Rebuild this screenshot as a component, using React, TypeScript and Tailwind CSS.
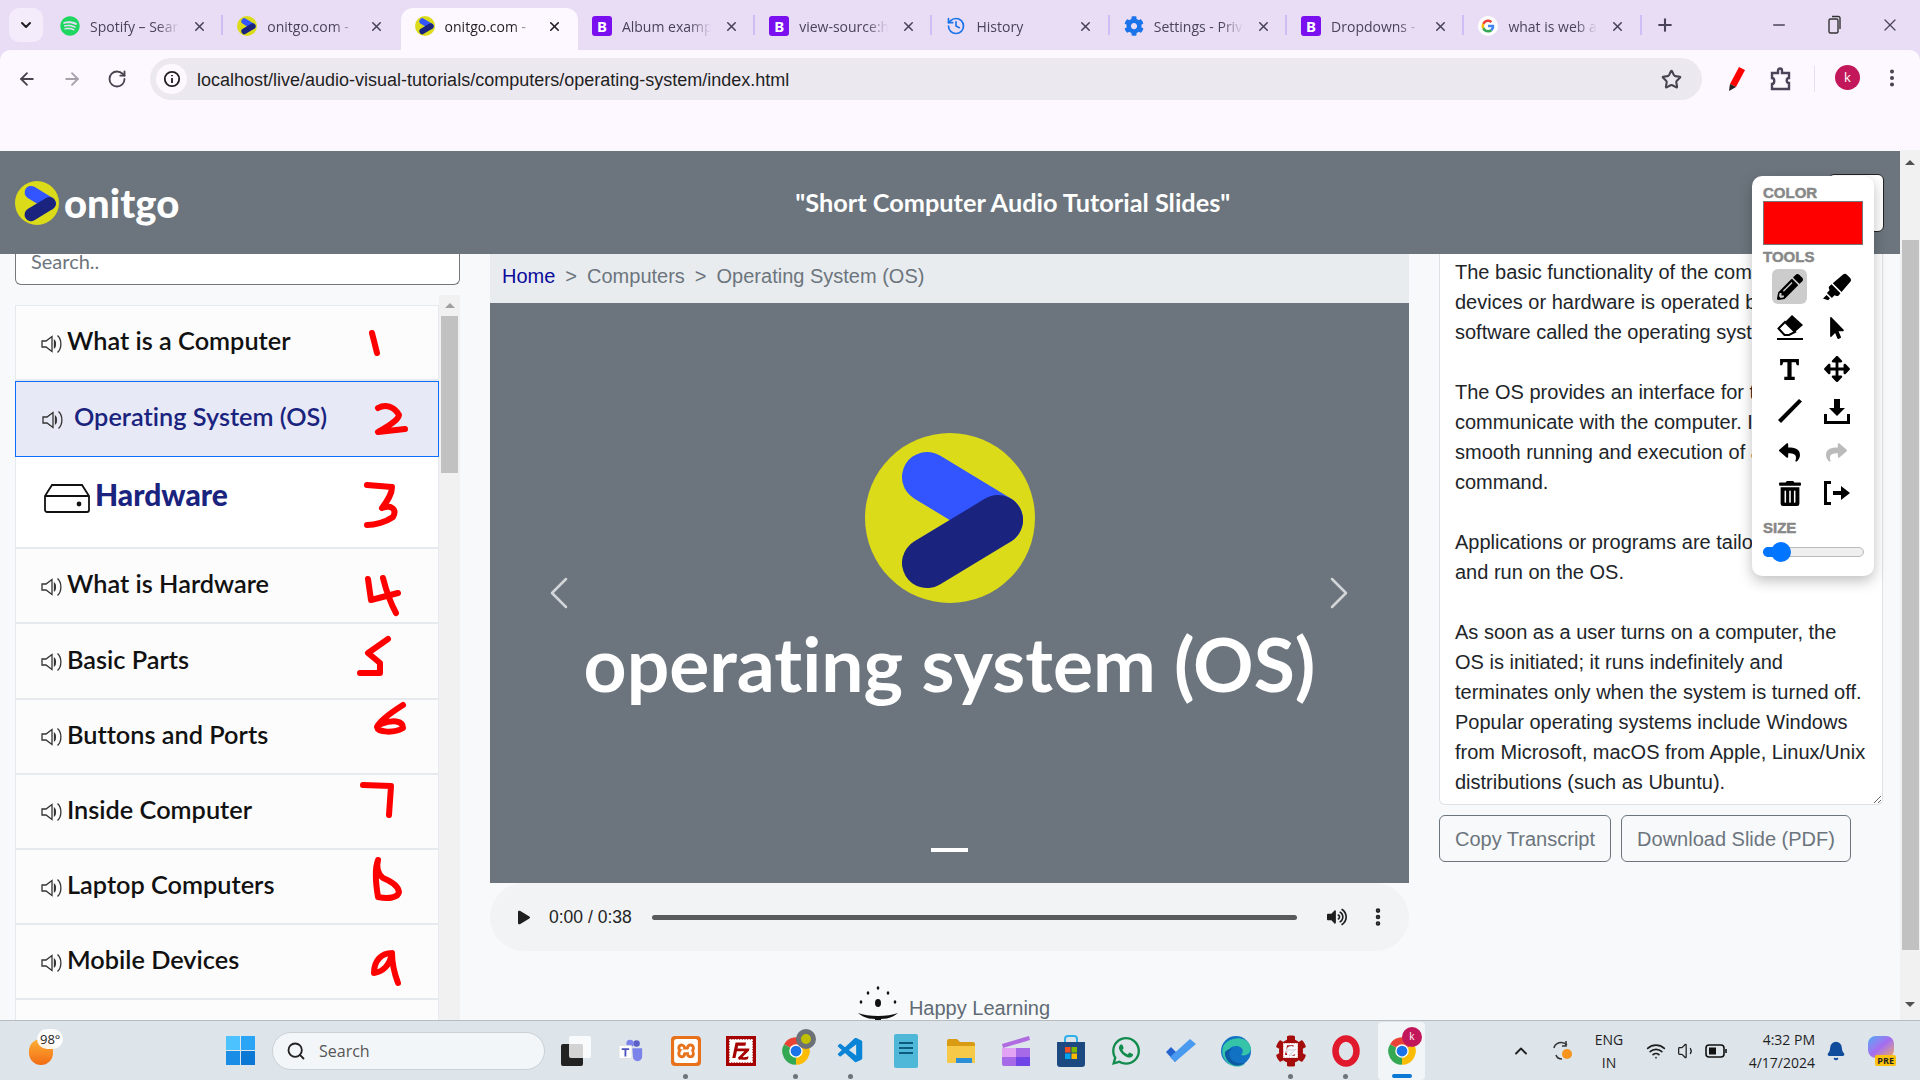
import React from 'react';
import { ArrowLeft, ArrowRight, RotateCw, Star, X, Plus, Minus, ChevronDown, ChevronUp, ChevronLeft, ChevronRight, EllipsisVertical, History, Search, Wifi, Volume1, Bell } from 'lucide-react';
import { FaSpotify, FaCog, FaWhatsapp, FaPencilAlt, FaHighlighter, FaMousePointer, FaArrowsAlt, FaReply, FaShare, FaPlay, FaVolumeUp, FaTrashAlt } from 'react-icons/fa';
import { SiXampp, SiFilezilla } from 'react-icons/si';
import { VscVscode } from 'react-icons/vsc';

const LogoMark = ({ className }: { className: string }) => (
  <svg viewBox="0 0 170 170" className={className}>
    <circle cx="85" cy="85" r="85" fill="#dbdb1a" />
    <path d="M62 44 L133 87" stroke="#3355ff" strokeWidth="50" strokeLinecap="round" />
    <path d="M62 130 L133 87" stroke="#1a237e" strokeWidth="50" strokeLinecap="round" />
  </svg>
);

const BootstrapIcon = () => (
  <span className="flex h-5 w-5 items-center justify-center rounded-[3px] bg-[#7a10f0] text-[15px] font-bold leading-none text-white">B</span>
);

const GoogleIcon = () => (
  <svg viewBox="0 0 48 48" className="h-5 w-5">
    <circle cx="24" cy="24" r="24" fill="#fff" />
    <path fill="#EA4335" d="M24 14.5c2.6 0 4.5 1 5.9 2.3l4.3-4.2C31.600 10.100 28.100 8.500 24 8.500c-6.100 0-11.300 3.500-13.800 8.600l5 3.900c1.200-3.700 4.700-6.500 8.800-6.500z" />
    <path fill="#4285F4" d="M39 24.400c0-1.300-.1-2.200-.3-3.200H24v5.800h8.400c-.2 1.400-1.100 3.500-3.200 4.900l4.900 3.800c2.900-2.700 4.900-6.600 4.900-11.300z" />
    <path fill="#FBBC05" d="M15.200 27c-.3-.9-.5-1.900-.5-3s.2-2.100.5-3l-5-3.900C9.100 19.200 8.500 21.500 8.500 24s.6 4.800 1.700 6.900l5-3.900z" />
    <path fill="#34A853" d="M24 39.500c4.200 0 7.700-1.400 10.200-3.800l-4.900-3.800c-1.300.9-3 1.500-5.300 1.500-4.100 0-7.600-2.800-8.800-6.400l-5 3.900c2.500 5.100 7.700 8.600 13.800 8.600z" />
  </svg>
);

const tabs = [
  { title: 'Spotify – Sear', icon: <FaSpotify className="h-5 w-5 text-[#1ed760]" /> },
  { title: 'onitgo.com -', icon: <LogoMark className="h-5 w-5" /> },
  { title: 'onitgo.com -', icon: <LogoMark className="h-5 w-5" />, active: true },
  { title: 'Album examp', icon: <BootstrapIcon /> },
  { title: 'view-source:h', icon: <BootstrapIcon /> },
  { title: 'History', icon: <History className="h-5 w-5 text-[#1a73e8]" strokeWidth={2} /> },
  { title: 'Settings - Priv', icon: <FaCog className="h-5 w-5 text-[#1a73e8]" /> },
  { title: 'Dropdowns -', icon: <BootstrapIcon /> },
  { title: 'what is web a', icon: <GoogleIcon /> },
];

const TabStrip = () => (
  <div className="flex h-[50px] shrink-0 items-start bg-[#e9ddf6] text-[#4a4458]">
    <div className="ml-[9px] mt-2 flex h-[34px] w-[34px] items-center justify-center rounded-[10px] bg-[#f4ecfb]">
      <ChevronDown className="h-4 w-4 text-[#1f1f1f]" strokeWidth={3} />
    </div>
    <div className="ml-[3px] flex">
      {tabs.map((tab, i) => (
        <div
          key={i}
          className={`relative mt-2 flex h-[42px] w-[177.300px] items-center pb-[6px] pl-[14px] ${tab.active ? 'rounded-t-[12px] bg-[#fdf7ff] text-[#1f1f1f]' : ''}`}
        >
          <span className="flex w-5 shrink-0 justify-center">{tab.icon}</span>
          <span className="ml-[10px] w-[94px] overflow-hidden whitespace-nowrap text-[14px] [mask-image:linear-gradient(to_right,black_72%,transparent_95%)] [font-family:'Open_Sans',sans-serif]">
            {tab.title}
          </span>
          <X className="ml-[8px] h-[15px] w-[15px]" strokeWidth={2.5} />
          {i !== 1 && i !== 2 && <span className="absolute right-0 top-[7px] h-5 w-[2px] bg-[#cdbff5]" />}
        </div>
      ))}
    </div>
    <Plus className="ml-[13px] mt-[15px] h-5 w-5" strokeWidth={2.5} />
    <div className="ml-auto mt-[15px] flex items-center pr-[20px]">
      <Minus className="h-[18px] w-[18px]" />
      <svg viewBox="0 0 16 20" className="ml-[38px] h-5 w-4 fill-none stroke-[#333]" strokeWidth="1.400">
        <rect x="3" y="4" width="9" height="14" rx="1.500" />
        <path d="M6 1.500h6.500a1.500 1.500 0 0 1 1.500 1.500v11" />
      </svg>
      <X className="ml-[38px] h-[20px] w-[20px]" strokeWidth={1.5} />
    </div>
  </div>
);

const Toolbar = () => (
  <div className="h-[100px] shrink-0 bg-[#e9ddf6]">
    <div className="flex h-full items-start rounded-t-[10px] bg-[#fdf7ff] pt-2">
      <ArrowLeft className="ml-[17px] mt-[11px] h-5 w-5 text-[#47434f]" strokeWidth={2.2} />
      <ArrowRight className="ml-[25px] mt-[11px] h-5 w-5 text-[#a5a1ab]" strokeWidth={2.2} />
      <RotateCw className="ml-[25px] mt-[11px] h-5 w-5 text-[#47434f]" strokeWidth={2.2} />
      <div className="ml-[23px] flex h-[42px] w-[1552px] items-center rounded-full bg-[#ece8f0] pl-[6px]">
        <span className="flex h-[30px] w-[31px] items-center justify-center rounded-full bg-[#fdf7ff]">
          <svg viewBox="0 0 20 20" className="h-[18px] w-[18px] fill-none stroke-[#1f1f1f]" strokeWidth="2">
            <circle cx="10" cy="10" r="8" />
            <path d="M10 9v5.500M10 5.500v1.500" />
          </svg>
        </span>
        <span className="ml-[10px] mt-[2px] whitespace-nowrap text-[18px] text-[#1f1f1f] [font-family:'Liberation_Sans',sans-serif]">
          localhost/live/audio-visual-tutorials/computers/operating-system/index.html
        </span>
        <Star className="ml-auto mr-5 h-[21px] w-[21px] text-[#47434f]" strokeWidth={2.4} />
      </div>
      <svg viewBox="0 0 20 26" className="ml-[24px] mt-[8px] h-[26px] w-5">
        <path d="M13 1l6 3-9 17-6-3z" fill="#f00" />
        <path d="M4 18l6 3-7 4z" fill="#222" />
      </svg>
      <svg viewBox="0 0 22 24" className="ml-[24px] mt-[9px] h-6 w-[22px] fill-none stroke-[#4a4458]" strokeWidth="2.400">
        <path d="M2 6h6V3.500a2 2 0 0 1 4 0V6h7v5c-3 0-3 5 0 5v6H2v-5c3 0 3-6 0-6z" />
      </svg>
      <span className="ml-[22px] mt-[8px] h-[26px] w-px bg-[#e6dff0]" />
      <span className="ml-[20px] mt-[7px] flex h-[25px] w-[25px] items-center justify-center rounded-full bg-[#c2185b] text-[13px] text-white [font-family:'Open_Sans',sans-serif]">k</span>
      <EllipsisVertical className="ml-[21px] mt-[9px] h-[22px] w-[22px] text-[#47434f]" strokeWidth={2.4} />
    </div>
  </div>
);

const Speaker = () => (
  <svg viewBox="0 0 21 22" className="mt-[3px] h-[22px] w-[21px] shrink-0 fill-none stroke-[#333]" strokeWidth="1.300">
    <path d="M1 8h4l6-4.500v15L5 14H1z" />
    <path d="M13.500 7.500c1.200 1 1.200 6 0 7z" fill="#222" />
    <path d="M16.500 2.500c4.500 4 4.500 13 0 17" />
  </svg>
);

const lessons = [
  { title: 'What is a Computer' },
  { title: 'Operating System (OS)', selected: true },
  { title: 'Hardware', heading: true },
  { title: 'What is Hardware' },
  { title: 'Basic Parts' },
  { title: 'Buttons and Ports' },
  { title: 'Inside Computer' },
  { title: 'Laptop Computers' },
  { title: 'Mobile Devices' },
  { title: '' },
];

const Sidebar = () => (
  <div className="ml-[15px] flex w-[445px] shrink-0 flex-col overflow-hidden">
    <input
      placeholder="Search.."
      className="h-[31px] w-full shrink-0 rounded-b-[6px] border border-t-0 border-[#777] bg-white pb-[16px] pl-[15px] text-[20px] outline-none placeholder:text-[#6c757d] [font-family:'Lato',sans-serif]"
    />
    <div className="mt-[10px] flex min-h-0 flex-1">
      <div className="w-[424px] shrink-0 overflow-hidden pt-[10px]">
        <div className="border-x border-t border-[#e6eaee] [font-family:'Lato',sans-serif] [font-variant-ligatures:none]">
          {lessons.map((lesson) =>
            lesson.heading ? (
              <div key={lesson.title} className="flex h-[92px] items-start border-b-2 border-[#e6eaee] bg-white pl-7 pt-[26px]">
                <svg viewBox="0 0 46 30" className="h-[30px] w-[46px] fill-none stroke-[#111]" strokeWidth="1.800">
                  <path d="M1 13L8 2h30l7 11v14a2 2 0 0 1-2 2H3a2 2 0 0 1-2-2z" />
                  <path d="M1 13h44" />
                  <circle cx="35" cy="21" r="1.500" fill="#111" />
                </svg>
                <span className="ml-[5px] mt-[-7px] text-[30px] font-black leading-[36px] text-[#1a237e]">{lesson.title}</span>
              </div>
            ) : lesson.selected ? (
              <div key={lesson.title} className="-mx-px flex h-[76px] items-center border border-[#0d6efd] bg-[#e7e9f6] pb-[2px] pl-[26px] text-[#1a237e]">
                <Speaker />
                <span className="ml-[11px] mt-[-2px] text-[25.300px] font-semibold">{lesson.title}</span>
              </div>
            ) : (
              <div key={lesson.title} className="flex h-[75.200px] items-center border-b-2 border-[#e6eaee] bg-[#fcfcfc] pb-[1px] pl-[25px] text-[#111]">
                {lesson.title && <Speaker />}
                <span className="ml-[5px] mt-[-2px] text-[25.300px] font-semibold">{lesson.title}</span>
              </div>
            ),
          )}
        </div>
      </div>
      <div className="flex w-[21px] flex-col items-center bg-[#f1f1f1] pt-[8px]">
        <span className="h-0 w-0 border-x-[5px] border-b-[5px] border-x-transparent border-b-[#a0a0a0]" />
        <span className="mt-[8px] h-[157px] w-[17px] bg-[#c1c1c1]" />
      </div>
    </div>
  </div>
);

const AudioBar = () => (
  <div className="flex h-[68px] shrink-0 items-center rounded-[34px] bg-[#f1f3f4] text-[#1f1f1f]">
    <FaPlay className="ml-[28px] h-[15px] w-[12px]" />
    <span className="ml-[19px] w-[82px] whitespace-nowrap text-[17.500px] [font-family:'Liberation_Sans',sans-serif]">0:00 / 0:38</span>
    <span className="ml-[21px] h-[5px] w-[645px] rounded-full bg-[#5a5a5a]" />
    <FaVolumeUp className="ml-[30px] h-5 w-5" />
    <EllipsisVertical className="ml-[20px] h-[22px] w-[22px]" strokeWidth={3} />
  </div>
);

const MainColumn = () => (
  <div className="ml-[30px] flex w-[919px] shrink-0 flex-col [font-family:'Liberation_Sans',sans-serif]">
    <div className="flex h-[49px] shrink-0 items-center gap-[10px] bg-[#e9ecef] pb-[5px] pl-3 text-[20px] text-[#6c757d]">
      <span className="text-[#0a0a9c]">Home</span>
      <span>&gt;</span>
      <span>Computers</span>
      <span>&gt;</span>
      <span>Operating System (OS)</span>
    </div>
    <div className="relative flex h-[580px] shrink-0 flex-col items-center bg-[#6c757d] pt-[130px]">
      <LogoMark className="h-[170px] w-[170px]" />
      <div className="mt-[14px] whitespace-nowrap text-[75px] font-bold leading-[92px] text-white [font-family:'Lato',sans-serif] [font-variant-ligatures:none]">operating system (OS)</div>
      <ChevronLeft className="absolute left-[41px] top-[262px] h-[56px] w-[56px] text-white/70" strokeWidth={1.100} />
      <ChevronRight className="absolute right-[42px] top-[262px] h-[56px] w-[56px] text-white/70" strokeWidth={1.100} />
      <span className="absolute bottom-[31px] left-[441px] h-[4px] w-[37px] bg-white" />
    </div>
    <AudioBar />
    <div className="mt-[34px] flex items-start justify-center pl-[9px] text-[20px] text-[#5f6b75]">
      <svg viewBox="0 0 40 36" className="h-[36px] w-[40px] fill-[#111]">
        <ellipse cx="20" cy="3" rx="1.300" ry="1.800" />
        <ellipse cx="10" cy="8" rx="1.300" ry="1.800" />
        <ellipse cx="30" cy="8" rx="1.300" ry="1.800" />
        <ellipse cx="3" cy="17" rx="1.300" ry="1.800" />
        <ellipse cx="37" cy="17" rx="1.300" ry="1.800" />
        <ellipse cx="20" cy="18" rx="3" ry="4" />
        <path d="M0 28c10 4 30 4 40 0-6 5-12 6-17 6v2h-6v-2c-5 0-11-1-17-6z" />
      </svg>
      <span className="ml-[11px] mt-[8px]">Happy Learning</span>
    </div>
  </div>
);

const transcript = `The basic functionality of the computer's
devices or hardware is operated by a
software called the operating system.

The OS provides an interface for the user to
communicate with the computer. It ensures
smooth running and execution of any
command.

Applications or programs are tailored to
and run on the OS.

As soon as a user turns on a computer, the
OS is initiated; it runs indefinitely and
terminates only when the system is turned off.
Popular operating systems include Windows
from Microsoft, macOS from Apple, Linux/Unix
distributions (such as Ubuntu).`;

const TranscriptColumn = () => (
  <div className="ml-[30px] w-[444px] shrink-0 [font-family:'Liberation_Sans',sans-serif]">
    <textarea
      readOnly
      wrap="off"
      defaultValue={transcript}
      className="block h-[551px] w-full resize overflow-hidden rounded-b-[6px] border border-t-0 border-[#dee2e6] bg-white pl-[15px] pt-[3px] text-[20px] leading-[30px] text-[#212529] outline-none"
    />
    <div className="mt-[10px] flex gap-[10px]">
      <button className="h-[47px] w-[172px] rounded-[6px] border border-[#6c757d] text-[20px] text-[#6c757d]">Copy Transcript</button>
      <button className="h-[47px] w-[230px] rounded-[6px] border border-[#6c757d] text-[20px] text-[#6c757d]">Download Slide (PDF)</button>
    </div>
  </div>
);

const paletteTools = [
  <FaPencilAlt className="h-[26px] w-[26px]" />,
  <FaHighlighter className="h-[28px] w-[28px]" />,
  <svg viewBox="0 0 26 25" className="h-[25px] w-[26px]">
    <path d="M15 0L26 10 18 17 8 7z" />
    <path d="M8 7L1.500 13.500 7.500 20 12 20 18 17z" fill="none" stroke="#000" strokeWidth="2" />
    <path d="M0 23h26v2H0z" />
  </svg>,
  <FaMousePointer className="h-[22px] w-[22px]" />,
  <svg viewBox="0 0 20 22" className="h-[23px] w-[21px]"><path d="M1 1h18v6h-2l-1-3h-4v14h3v3H5v-3h3V4H4L3 7H1z" /></svg>,
  <FaArrowsAlt className="h-[26px] w-[26px]" />,
  <svg viewBox="0 0 24 24" className="h-6 w-6"><path d="M21 0l3 2.500L3 24l-3-3z" /></svg>,
  <svg viewBox="0 0 26 26" className="h-[26px] w-[26px]"><path d="M10 1h6v9h5l-8 8-8-8h5zM0 16h3v7h20v-7h3v10H0z" /></svg>,
  <FaReply className="h-[21px] w-[21px]" />,
  <FaShare className="h-[21px] w-[21px] text-[#bbb]" />,
  <FaTrashAlt className="h-[25px] w-[22px]" />,
  <svg viewBox="0 0 26 24" className="h-6 w-[26px]"><path d="M0 0h7v3H3v18h4v3H0zM9 10h8V5l9 7-9 7v-5H9z" /></svg>,
];

const paletteLabel = "text-[15px] font-bold leading-[16px] text-[#888] [-webkit-text-stroke:0.5px_#888]";

const DrawingPalette = () => (
  <div className="absolute left-[1752px] top-[26px] z-20 h-[400px] w-[122px] rounded-[10px] bg-white pl-[11px] pt-[9px] shadow-[0_5px_14px_rgba(0,0,0,0.25)] [font-family:'Liberation_Sans',sans-serif]">
    <div className={paletteLabel}>COLOR</div>
    <div className="h-[44px] w-[100px] border border-[#777] bg-[#f00]" />
    <div className={`mt-[4px] ${paletteLabel}`}>TOOLS</div>
    <div className="ml-[9px] mt-[4px] grid w-[84px] grid-cols-[35px_35px] gap-x-[12px] gap-y-[6.400px]">
      {paletteTools.map((tool, i) => (
        <span key={i} className={`flex h-[35px] items-center justify-center rounded-[6px] ${i === 0 ? 'bg-[#ccc]' : ''}`}>
          {tool}
        </span>
      ))}
    </div>
    <div className={`mt-[9px] ${paletteLabel}`}>SIZE</div>
    <div className="relative mt-[11px] h-[10px] w-[101px] rounded-full border border-[#bbb] bg-[#efefef]">
      <span className="absolute -left-px -top-px h-[10px] w-5 rounded-full bg-[#0075ff]" />
      <span className="absolute left-[7px] top-[-6px] h-5 w-5 rounded-full bg-[#0075ff]" />
    </div>
  </div>
);

const ChromeIcon = () => (
  <svg viewBox="0 0 24 24" className="h-[30px] w-[30px]">
    <path d="M12 12L2.470 6.500A11 11 0 0 1 21.530 6.500z" fill="#ea4335" />
    <path d="M12 12L21.530 6.500A11 11 0 0 1 12 23z" fill="#fbbc05" />
    <path d="M12 12L12 23A11 11 0 0 1 2.470 6.500z" fill="#34a853" />
    <circle cx="12" cy="12" r="5.400" fill="#fff" />
    <circle cx="12" cy="12" r="4.300" fill="#1a73e8" />
  </svg>
);

const taskbarApps = [
  {
    icon: (
      <span className="relative block h-[30px] w-[30px]">
        <span className="absolute bottom-0 left-0 h-[22px] w-[22px] rounded-[2px] bg-[#222]" />
        <span className="absolute right-0 top-0 h-[22px] w-[22px] rounded-[2px] bg-white/80" />
      </span>
    ),
  },
  {
    icon: (
      <svg viewBox="0 0 28 28" className="h-[26px] w-[26px]">
        <circle cx="20" cy="6" r="3.500" fill="#5b5fc7" />
        <path d="M15 11h11v9a5 5 0 0 1-10 0z" fill="#7b83eb" />
        <circle cx="13" cy="6" r="4" fill="#7b83eb" />
        <rect x="1" y="8" width="14" height="14" rx="1.500" fill="#fff" stroke="#ddd" />
        <path d="M4 11h8v2H9v7H7v-7H4z" fill="#4b53bc" />
      </svg>
    ),
  },
  {
    dot: true,
    icon: (
      <span className="flex h-[30px] w-[30px] items-center justify-center rounded-[4px] bg-[#e8711c]">
        <SiXampp className="h-[24px] w-[24px] text-white" />
      </span>
    ),
  },
  {
    icon: (
      <span className="flex h-[30px] w-[30px] items-center justify-center bg-[#a60000]">
        <SiFilezilla className="h-[24px] w-[24px] text-white" />
      </span>
    ),
  },
  {
    dot: true,
    icon: (
      <span className="relative block h-[30px] w-[30px]">
        <ChromeIcon />
        <span className="absolute -right-[5px] -top-[7px] h-5 w-5 rounded-full border-[5px] border-[#6b7177] bg-[#c0c000]" />
      </span>
    ),
  },
  { dot: true, icon: <VscVscode className="h-[30px] w-[30px] text-[#0a84d6]" /> },
  {
    icon: (
      <span className="flex h-[34px] w-[24px] flex-col gap-[3px] rounded-[2px] bg-[#4fb8d8] px-[5px] pt-[8px]">
        <span className="h-[2px] bg-[#0d5c80]" />
        <span className="h-[2px] bg-[#0d5c80]" />
        <span className="h-[2px] bg-[#0d5c80]" />
      </span>
    ),
  },
  {
    icon: (
      <svg viewBox="0 0 30 26" className="h-[28px] w-[30px]">
        <path d="M1 3a2 2 0 0 1 2-2h8l3 3h13a2 2 0 0 1 2 2v4H1z" fill="#d99b12" />
        <path d="M1 8h28v16a1 1 0 0 1-1 1H2a1 1 0 0 1-1-1z" fill="#f7c948" />
        <path d="M10 20h16v5H10z" fill="#2a8fd6" />
      </svg>
    ),
  },
  {
    icon: (
      <svg viewBox="0 0 30 30" className="h-[30px] w-[30px]">
        <path d="M1 8L28 0l1 4L2 12z" fill="#b06be0" />
        <path d="M1 12h28v16a2 2 0 0 1-2 2H3a2 2 0 0 1-2-2z" fill="#a66ae8" />
        <path d="M1 12h14v9H1z" fill="#e3a3f5" />
        <path d="M15 21h14v9H15z" fill="#6f45e8" />
      </svg>
    ),
  },
  {
    icon: (
      <svg viewBox="0 0 30 32" className="h-[32px] w-[30px]">
        <path d="M9 8V4a3 3 0 0 1 3-3h6a3 3 0 0 1 3 3v4" fill="none" stroke="#2fb0e8" strokeWidth="2" />
        <path d="M1 7h28v22a3 3 0 0 1-3 3H4a3 3 0 0 1-3-3z" fill="#1c4a80" />
        <rect x="9" y="12" width="5.500" height="5.500" fill="#f25022" />
        <rect x="15.500" y="12" width="5.500" height="5.500" fill="#7fba00" />
        <rect x="9" y="18.500" width="5.500" height="5.500" fill="#00a4ef" />
        <rect x="15.500" y="18.500" width="5.500" height="5.500" fill="#ffb900" />
      </svg>
    ),
  },
  { icon: <FaWhatsapp className="h-[32px] w-[32px] text-[#128c4c]" /> },
  {
    icon: (
      <svg viewBox="0 0 32 26" className="h-[26px] w-[32px]">
        <path d="M1 14l5-5 9 9-5 6z" fill="#2564cf" />
        <path d="M10 24l-5-5L25 1l6 5z" fill="#4a9bf0" />
      </svg>
    ),
  },
  {
    icon: (
      <svg viewBox="0 0 32 32" className="h-[32px] w-[32px]">
        <circle cx="16" cy="16" r="15" fill="#1172c4" />
        <path d="M3 12C6 3 24-1 30 10c3 7-3 12-9 10 4-4 1-9-5-9-7 0-9 6-7 12 2 5 8 8 16 6-8 6-19 1-22-8-1-3-1-6 0-9z" fill="#35c4a8" />
        <path d="M14 13c-5 1-6 7-3 11 3 4 9 5 14 4-9 7-21-1-20-11 3-3 6-4 9-4z" fill="#0c59a4" />
      </svg>
    ),
  },
  {
    dot: true,
    icon: (
      <span className="relative flex h-[30px] w-[30px] items-center justify-center">
        <FaCog className="absolute h-[32px] w-[32px] text-[#a50c0c]" />
        <SiFilezilla className="relative h-[15px] w-[15px] text-white" />
      </span>
    ),
  },
  {
    dot: true,
    icon: (
      <svg viewBox="0 0 30 32" className="h-[32px] w-[30px] fill-none stroke-[#e0192c]" strokeWidth="6.500">
        <ellipse cx="15" cy="16" rx="10.500" ry="12.500" />
      </svg>
    ),
  },
];

const Taskbar = () => (
  <div className="relative z-10 flex h-[60px] shrink-0 items-center border-t border-[#b5bcc2] bg-[#dde4ea] text-[#1f1f1f] [font-family:'Open_Sans',sans-serif]">
    <div className="relative ml-[29px] mt-[2px] h-[26px] w-[24px] rounded-full bg-gradient-to-b from-[#fbb034] to-[#f26a13]">
      <span className="absolute -top-[10px] left-[8px] rounded-full bg-white/90 px-[3px] text-[13px] leading-[20px]">98°</span>
    </div>
    <div className="ml-[173px] grid h-[29px] w-[29px] grid-cols-2 gap-[1px]">
      <span className="bg-[#4cc2ff]" />
      <span className="bg-[#2aa5f5]" />
      <span className="bg-[#1a8de6]" />
      <span className="bg-[#0a78d4]" />
    </div>
    <div className="ml-[17px] flex h-[38px] w-[273px] items-center rounded-full border border-[#c9d0d6] bg-[#f3f6f8] pl-[13px]">
      <Search className="h-5 w-5 text-[#222]" strokeWidth={2.2} />
      <span className="ml-[13px] text-[16px] text-[#555]">Search</span>
    </div>
    <div className="ml-[3px] flex">
      {taskbarApps.map((app, i) => (
        <div key={i} className="relative flex h-[58px] w-[55px] items-center justify-center">
          {app.icon}
          {app.dot && <span className="absolute bottom-[1px] h-[5px] w-[5px] rounded-full bg-[#6e7478]" />}
        </div>
      ))}
      <div className="relative ml-[5px] flex h-[58px] w-[47px] items-center justify-center rounded-[4px] bg-[#f2f5f7]">
        <ChromeIcon />
        <span className="absolute right-[3px] top-[5px] flex h-[20px] w-[20px] items-center justify-center rounded-full bg-[#c2185b] text-[10px] text-white">k</span>
        <span className="absolute bottom-[2px] h-[4px] w-5 rounded-full bg-[#0a78d4]" />
      </div>
    </div>
    <ChevronUp className="ml-[86px] h-5 w-5" strokeWidth={2.2} />
    <svg viewBox="0 0 22 24" className="ml-[20px] h-6 w-[22px] fill-none stroke-[#333]" strokeWidth="1.500">
      <path d="M3 9c1-5 8-8 13-3M5 16c1 3 4 4 6 4" />
      <path d="M15 2v5h-4" />
      <circle cx="16" cy="15" r="5" fill="#f7941d" stroke="none" />
    </svg>
    <div className="ml-[16px] w-[40px] text-center text-[14px] leading-[23px]">
      <div>ENG</div>
      <div>IN</div>
    </div>
    <Wifi className="ml-[17px] h-[20px] w-[20px]" strokeWidth={2} />
    <Volume1 className="ml-[11px] h-[20px] w-[20px]" strokeWidth={1.5} />
    <svg viewBox="0 0 22 14" className="ml-[8px] h-[14px] w-[22px] fill-none stroke-[#111]" strokeWidth="1.600">
      <rect x="1" y="1" width="18" height="12" rx="3" />
      <rect x="4" y="3.500" width="7" height="7" fill="#111" stroke="none" />
      <path d="M21 5v4" />
    </svg>
    <div className="w-[88px] text-right text-[14px] leading-[23px]">
      <div>4:32 PM</div>
      <div>4/17/2024</div>
    </div>
    <Bell className="ml-[11px] h-5 w-5 fill-[#0f4c9c] text-[#0f4c9c]" />
    <div className="relative ml-[22px] h-[30px] w-[28px]">
      <span className="absolute left-0 top-0 h-[22px] w-[26px] rounded-[8px] bg-gradient-to-br from-[#35a7f5] via-[#a56cf0] to-[#f6a03c]" />
      <span className="absolute bottom-0 right-0 rounded-[2px] bg-[#ffc20e] px-[2px] text-[9px] font-bold leading-[11px] text-[#222]">PRE</span>
    </div>
  </div>
);

const penMarks = [
  'M372 333L377 353',
  'M378 408C385 404 394 406 399 415C398 421 385 428 378 432L405 429',
  'M367 485L392 487C392 494 388 500 382 508C392 504 397 510 393 517C386 522 375 525 367 525',
  'M368 579L371 600L398 593M383 578C386 590 390 602 396 613',
  'M388 639L368 653L380 663L380 673L360 673',
  'M403 705C392 712 380 720 377 727C378 733 395 733 403 728C403 720 392 720 381 724',
  'M363 785L391 786L389 815',
  'M378 860C374 870 376 885 378 897C388 899 398 898 399 892C398 884 388 880 383 878C378 874 376 868 378 860',
  'M392 953C382 953 374 960 374 973C382 972 390 966 392 953C392 965 395 975 398 983',
];

export default function App() {
  return (
    <div className="relative flex h-[1080px] w-[1920px] flex-col overflow-hidden bg-[#f8f9fa]">
      <TabStrip />
      <Toolbar />
      <div className="relative flex min-h-0 flex-1">
        <div className="flex min-w-0 flex-1 flex-col pt-px">
          <div className="flex h-[103px] shrink-0 items-center bg-[#6c757d] text-white [font-family:'Lato',sans-serif] [font-variant-ligatures:none]">
            <LogoMark className="ml-[15px] h-[44px] w-[44px]" />
            <span className="ml-[5px] text-[40px] font-black leading-none">onitgo</span>
            <span className="ml-[616px] whitespace-nowrap text-[25.300px] font-bold">"Short Computer Audio Tutorial Slides"</span>
            <span className="ml-auto mr-[16px] h-[58px] w-[56px] rounded-[6px] border border-[#222] bg-white" />
          </div>
          <div className="flex min-h-0 flex-1 overflow-hidden">
            <Sidebar />
            <MainColumn />
            <TranscriptColumn />
          </div>
        </div>
        <div className="flex w-[20px] shrink-0 flex-col items-center bg-[#f1f1f1] pt-[10px]">
          <span className="h-0 w-0 border-x-[5px] border-b-[5px] border-x-transparent border-b-[#505050]" />
          <span className="mt-[75px] h-[710px] w-[17px] bg-[#c1c1c1]" />
          <span className="mt-[52px] h-0 w-0 border-x-[5px] border-t-[5px] border-x-transparent border-t-[#505050]" />
        </div>
        <DrawingPalette />
      </div>
      <Taskbar />
      <svg viewBox="0 0 1920 1080" className="pointer-events-none absolute left-0 top-0 h-[1080px] w-[1920px] fill-none stroke-[#f00]" strokeWidth="6" strokeLinecap="round" strokeLinejoin="round">
        {penMarks.map((d) => (
          <path key={d} d={d} />
        ))}
      </svg>
    </div>
  );
}
